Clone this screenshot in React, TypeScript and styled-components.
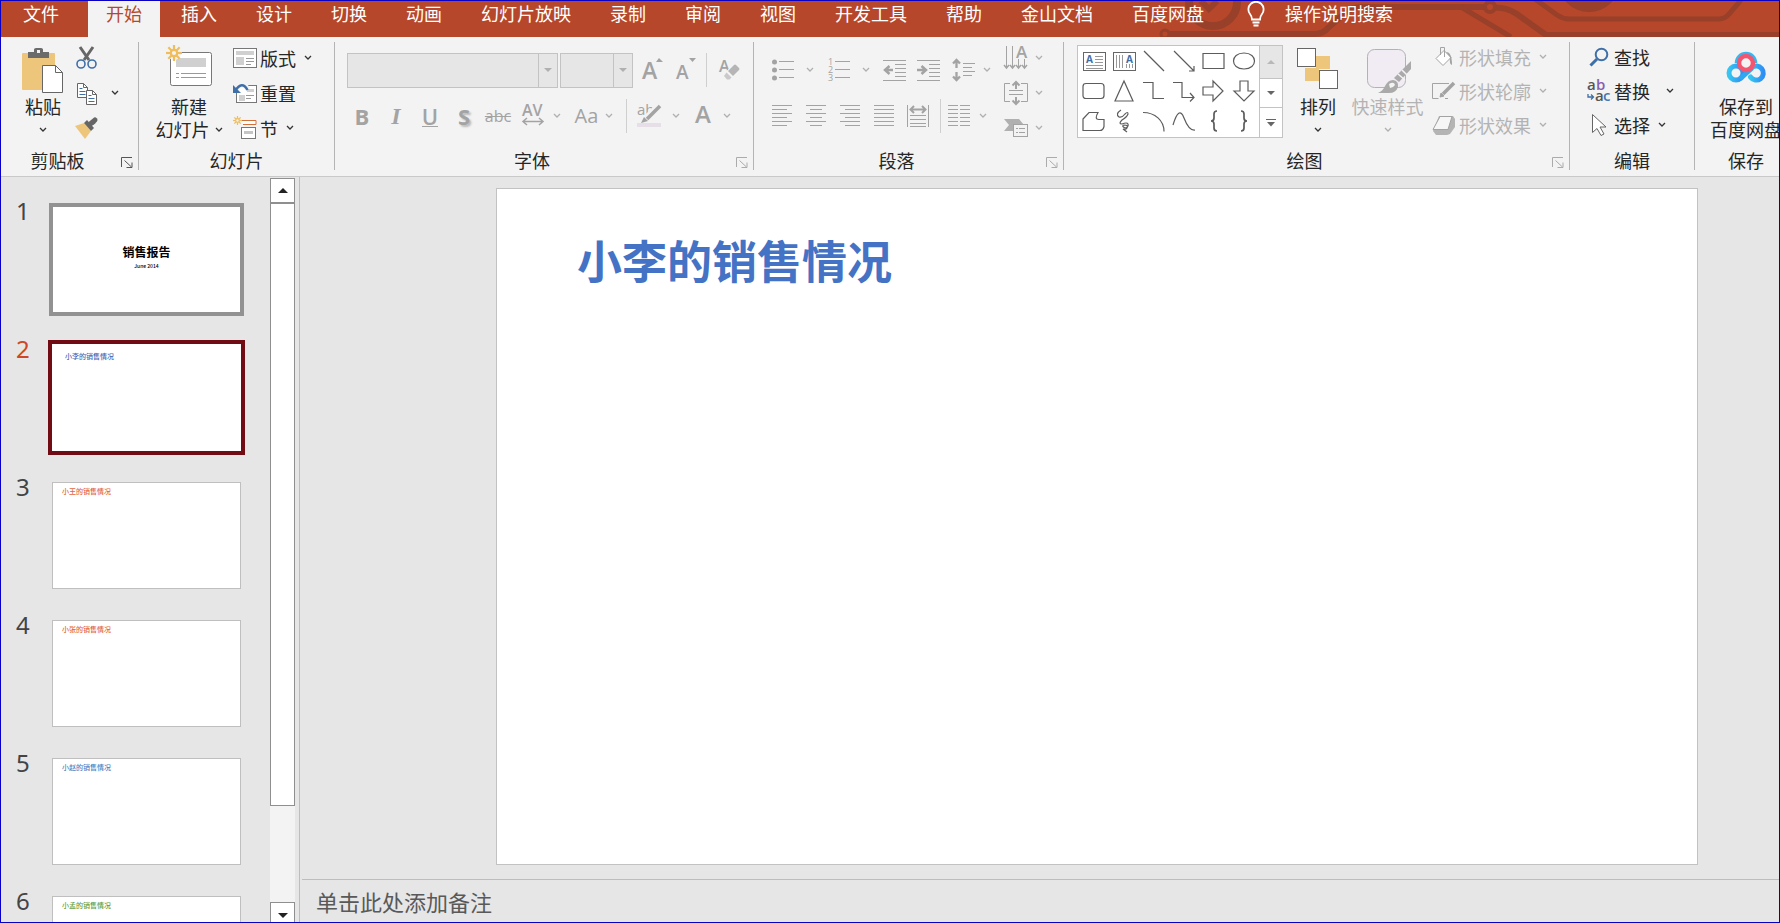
import React from "react";
import styled, { createGlobalStyle, css } from "styled-components";

const GlobalStyle = createGlobalStyle`
  *, *::before, *::after { box-sizing: border-box; }
  body {
    margin: 0;
    font-family: "Noto Sans CJK SC", "Noto Sans", sans-serif;
    font-size: 18px;
    line-height: 24px;
    color: #262626;
    background: #e6e6e6;
  }
  button { border: 0; padding: 0; background: none; font: inherit; color: inherit; }
  svg { display: block; flex: none; overflow: visible; }
`;

const GREY = "#a3a3a3";
const INK = "#666";
const GOLD = "#edc67c";
const BLUE = "#3f6fa8";

/* ---------- window ---------- */

const Window = styled.div`
  display: flex;
  flex-direction: column;
  height: 100vh;
  border: 1px solid #0a00c4;
  overflow: hidden;
  background: #e6e6e6;
`;

/* ---------- tab bar ---------- */

const TabBar = styled.nav`
  position: relative;
  flex: none;
  display: flex;
  gap: 3px;
  height: 36px;
  padding-left: 4px;
  overflow: hidden;
  background: #b7472a;
  color: #fff;
`;

const Circuit = styled.svg`
  position: absolute;
  top: 0;
  right: 0;
`;

const Tab = styled.button<{ $active?: boolean; $first?: boolean }>`
  position: relative;
  flex: none;
  padding: 0 18px 12px;
  white-space: nowrap;
  ${(p) => p.$first && css`margin-right: 8px;`}
  ${(p) => p.$active && css`background: #f3f3f3; color: #b7472a;`}
`;

const TellMe = styled.button`
  position: relative;
  flex: none;
  display: flex;
  align-items: flex-start;
  gap: 20px;
  padding: 0 18px 0 22px;
  white-space: nowrap;
`;

/* ---------- ribbon ---------- */

const Ribbon = styled.div`
  flex: none;
  display: flex;
  height: 140px;
  padding: 5px 0 6px;
  background: #f3f3f3;
  border-bottom: 1px solid #c9c9c9;
`;

const Group = styled.section<{ $width: number }>`
  flex: none;
  display: flex;
  flex-direction: column;
  width: ${(p) => p.$width}px;
  border-right: 1px solid #b4b4b4;
  &:last-child { border-right: 0; }
`;

const GroupBody = styled.div<{ $left: number; $gap?: number }>`
  flex: 1;
  min-height: 0;
  display: flex;
  align-items: flex-start;
  gap: ${(p) => p.$gap ?? 0}px;
  padding-left: ${(p) => p.$left}px;
`;

const GroupFooter = styled.div`
  flex: none;
  display: flex;
  align-items: center;
  height: 20px;
`;

const GroupLabel = styled.h2`
  flex: 1;
  margin: 0;
  font-size: 18px;
  font-weight: 400;
  line-height: 20px;
  text-align: center;
`;

const Launcher = styled.button`
  display: flex;
  justify-content: flex-end;
  width: 24px;
  padding: 4px 5px 0 0;
`;

const BigButton = styled.button<{ $width: number; $off?: boolean }>`
  flex: none;
  display: flex;
  flex-direction: column;
  align-items: center;
  width: ${(p) => p.$width}px;
  padding-top: 5px;
  line-height: 23px;
  white-space: nowrap;
  color: ${(p) => (p.$off ? "#b3b3b3" : "#262626")};
`;

const BigIcon = styled.span`
  display: flex;
  align-items: center;
  justify-content: center;
  height: 48px;
`;

const BigLine = styled.span`
  display: flex;
  align-items: center;
  gap: 5px;
  height: 23px;
`;

const Stack = styled.div<{ $row: number; $gap: number }>`
  flex: none;
  display: grid;
  grid-auto-rows: ${(p) => p.$row}px;
  gap: ${(p) => p.$gap}px;
  align-items: center;
  justify-items: start;
`;

const SmallButton = styled.button<{ $gap?: number; $off?: boolean }>`
  display: flex;
  align-items: center;
  gap: ${(p) => p.$gap ?? 8}px;
  line-height: 22px;
  white-space: nowrap;
  color: ${(p) => (p.$off ? "#b3b3b3" : "#262626")};
`;

const SmallIcon = styled.span`
  display: flex;
  justify-content: center;
  width: 24px;
  margin-right: -5px;
`;

const ToolRows = styled.div`
  display: flex;
  flex-direction: column;
  gap: 10px;
  padding-top: 10px;
`;

const ToolRow = styled.div<{ $pad?: number }>`
  display: flex;
  align-items: center;
  height: 36px;
  padding-left: ${(p) => p.$pad ?? 0}px;
`;

const Tool = styled.button<{ $width: number; $gap: number }>`
  flex: none;
  display: flex;
  align-items: center;
  justify-content: center;
  gap: ${(p) => p.$gap}px;
  width: ${(p) => p.$width}px;
  height: 34px;
  color: ${GREY};
`;

const Divider = styled.span`
  flex: none;
  width: 1px;
  height: 34px;
  margin: 0 5px;
  background: #cfcfcf;
`;

const Combo = styled.label<{ $width: number }>`
  flex: none;
  display: flex;
  width: ${(p) => p.$width}px;
  height: 35px;
  margin-right: 2px;
  border: 1px solid #c3c3c3;
  background: #e6e6e6;
`;

const ComboSelect = styled.select`
  flex: 1;
  min-width: 0;
  border: 0;
  appearance: none;
  background: transparent;
`;

const ComboArrow = styled.span`
  display: flex;
  align-items: center;
  justify-content: center;
  width: 19px;
  border-left: 1px solid #c3c3c3;
`;

const Gallery = styled.div`
  flex: none;
  display: flex;
  width: 206px;
  height: 93px;
  margin: 3px 10px 0 0;
  border: 1px solid #c3c3c3;
  background: #fff;
`;

const ShapeGrid = styled.div`
  flex: 1;
  display: grid;
  grid-template-columns: repeat(6, 30px);
  grid-template-rows: repeat(3, 30px);
  padding-left: 1px;
`;

const ShapeCell = styled.button`
  display: flex;
  align-items: center;
  justify-content: center;
`;

const GalleryScroll = styled.div`
  display: grid;
  grid-template-rows: 32px 29px 1fr;
  width: 23px;
  border-left: 1px solid #c3c3c3;
`;

const GalleryArrow = styled.button<{ $off?: boolean }>`
  display: flex;
  align-items: center;
  justify-content: center;
  background: ${(p) => (p.$off ? "#e6e6e6" : "#fff")};
  & + & { border-top: 1px solid #c3c3c3; }
`;

/* ---------- work area ---------- */

const Workspace = styled.div`
  flex: 1;
  min-height: 0;
  display: flex;
`;

const Sidebar = styled.aside`
  flex: none;
  display: flex;
  width: 299px;
  border-right: 1px solid #bdbdbd;
`;

const SlideList = styled.ol`
  flex: 1;
  margin: 0;
  padding: 29px 0 0 15px;
  list-style: none;
  overflow: hidden;
`;

const SlideItem = styled.li<{ $selected?: boolean }>`
  display: flex;
  height: 138px;
  font-family: "Noto Sans", "Open Sans", sans-serif;
  font-size: 24px;
  line-height: 10px;
  color: ${(p) => (p.$selected ? "#d04727" : "#444")};
`;

const SlideNumber = styled.span`
  width: 36px;
`;

type Ring = "none" | "grey" | "red";

const Thumb = styled.button<{ $ring: Ring; $ink: string }>`
  display: flex;
  width: 189px;
  height: 107px;
  padding: 4px 9px;
  border: 1px solid #bfbfbf;
  background: #fff;
  font-family: "Noto Sans CJK SC", sans-serif;
  font-size: 7px;
  font-weight: 500;
  line-height: 8px;
  color: ${(p) => p.$ink};
  ${(p) => p.$ring === "red" && css`
    padding: 7px 12px;
    border-color: #fff;
    outline: 4px solid #720c14;
  `}
  ${(p) => p.$ring === "grey" && css`
    flex-direction: column;
    align-items: center;
    justify-content: center;
    gap: 3px;
    padding: 0 0 4px;
    border-color: #929292;
    outline: 3px solid #929292;
  `}
`;

const CoverTitle = styled.strong`
  font-family: "Liberation Serif", "Noto Sans CJK SC", serif;
  font-size: 12px;
  font-weight: 700;
  line-height: 14px;
`;

const CoverDate = styled.span`
  font-size: 5px;
  line-height: 6px;
`;

const ScrollBar = styled.div`
  flex: none;
  display: flex;
  flex-direction: column;
  width: 25px;
  margin: 1px 4px 0 0;
  background: #f3f3f3;
`;

const ScrollButton = styled.button`
  flex: none;
  display: flex;
  align-items: center;
  justify-content: center;
  height: 25px;
  border: 1px solid #8f8f8f;
  background: #fff;
  &:last-child { height: 20px; padding-top: 5px; border-bottom: 0; }
`;

const ScrollThumb = styled.div`
  flex: 604 1 0;
  border: 1px solid #8f8f8f;
  background: #fff;
`;

const ScrollRest = styled.div`
  flex: 96 1 0;
`;

const Editor = styled.main`
  flex: 1;
  min-width: 0;
  display: flex;
  flex-direction: column;
  padding-left: 2px;
`;

const Stage = styled.div`
  flex: 1;
  display: flex;
  padding: 11px 81px 14px 194px;
`;

const Slide = styled.article`
  flex: 1;
  padding: 41px 80px;
  border: 1px solid #c2c2c2;
  background: #fff;
`;

const SlideTitle = styled.h1`
  margin: 0;
  font-size: 45px;
  font-weight: 700;
  line-height: 60px;
  color: #4472c4;
`;

const Notes = styled.textarea`
  flex: none;
  display: block;
  width: 100%;
  height: 43px;
  padding: 6px 14px 0;
  border: 0;
  border-top: 1px solid #bdbdbd;
  outline: 0;
  resize: none;
  overflow: hidden;
  background: transparent;
  font: 22px/30px "Noto Sans CJK SC", sans-serif;
  &::placeholder { color: #595959; opacity: 1; }
`;

/* ---------- icons ---------- */

const Svg = ({ w, h, children, stroke = "none", sw = 1 }: {
  w: number; h: number; children: React.ReactNode; stroke?: string; sw?: number;
}) => (
  <svg width={w} height={h} viewBox={`0 0 ${w} ${h}`} fill="none" stroke={stroke} strokeWidth={sw} aria-hidden="true">
    {children}
  </svg>
);

const Chevron = ({ off }: { off?: boolean }) => (
  <Svg w={8} h={6} stroke={off ? "#b0b0b0" : "#333"} sw={1.3}><path d="M1 1l3 3 3-3" /></Svg>
);

const Triangle = ({ up, color = "#222", size = 10 }: { up?: boolean; color?: string; size?: number }) => (
  <svg width={size} height={size / 2} viewBox="0 0 10 5" aria-hidden="true">
    <path d={up ? "M0 5L5 0l5 5z" : "M0 0l5 5 5-5z"} fill={color} />
  </svg>
);

const PasteIcon = () => (
  <Svg w={42} h={46}>
    <rect x="0" y="5" width="33" height="37" rx="1" fill={GOLD} />
    <path d="M6 4h6V1.500Q12 0 14 0h5q2 0 2 1.500V4h6v6H6z" fill="#6b6b6b" />
    <rect x="15" y="2" width="3" height="3" fill="#f3f3f3" />
    <path d="M20.500 17.500h13l7 7v20h-20z" fill="#fff" stroke={INK} />
    <path d="M33.500 17.500v7h7" stroke={INK} />
  </Svg>
);

const CutIcon = () => (
  <Svg w={22} h={24}>
    <path d="M4 1l9 13M17 1L8 14" stroke={INK} strokeWidth="3" />
    <circle cx="5" cy="18" r="4" stroke={BLUE} strokeWidth="1.600" />
    <circle cx="16" cy="18" r="4" stroke={BLUE} strokeWidth="1.600" />
  </Svg>
);

const CopyIcon = () => (
  <Svg w={22} h={23} stroke={INK}>
    <path d="M1.500 1.500h6l4 4v10h-10z" fill="#fff" />
    <path d="M7.500 1.500v4h4" />
    <path d="M3.500 6.500h3M3.500 9.500h6M3.500 12.500h6" stroke={BLUE} />
    <path d="M10.500 8.500h6l4 4v10h-10z" fill="#fff" />
    <path d="M16.500 8.500v4h4" />
    <path d="M12.500 13.500h3M12.500 16.500h6M12.500 19.500h6" stroke={BLUE} />
  </Svg>
);

const PainterIcon = () => (
  <Svg w={24} h={22}>
    <path d="M0 9l9-3 7 8-6 8z" fill={GOLD} />
    <path d="M9 6l3-3 7 8-3 3z" fill={INK} />
    <path d="M14 8l5-4" stroke={INK} strokeWidth="5" />
    <path d="M18 5l2-2" stroke={INK} strokeWidth="5" strokeLinecap="round" />
  </Svg>
);

const Spark = ({ x, y, r }: { x: number; y: number; r: number }) => (
  <g transform={`translate(${x} ${y})`} stroke="#f0bd5c" strokeWidth={r > 6 ? 2.2 : 1.2}>
    {[0, 45, 90, 135, 180, 225, 270, 315].map((a) => (
      <path key={a} transform={`rotate(${a})`} d={`M0 ${-r * 0.4}V${-r}`} />
    ))}
    <circle r={r * 0.4} />
  </g>
);

const NewSlideIcon = () => (
  <Svg w={46} h={46}>
    <rect x="4.500" y="4.500" width="41" height="33" rx="2" fill="#fff" stroke="#777" />
    <path d="M10 10h30v9H10z" fill="#d0d0d0" />
    <path d="M10 25.500h3M15 25.500h25M10 29.500h3M15 29.500h25" stroke="#999" />
    <circle cx="8" cy="5" r="7" fill="#f3f3f3" />
    <Spark x={8} y={5} r={8} />
  </Svg>
);

const LayoutIcon = () => (
  <Svg w={24} h={20}>
    <rect x="0.500" y="0.500" width="23" height="19" fill="#fff" stroke="#777" />
    <path d="M3 3h18v4H3zM3 9h8v8H3z" fill="#d0d0d0" />
    <path d="M13 10.500h8M13 13.500h8M13 16.500h5" stroke="#999" />
  </Svg>
);

const ResetIcon = () => (
  <Svg w={24} h={21}>
    <rect x="3.500" y="2.500" width="20" height="17" fill="#fff" stroke="#777" />
    <path d="M14 6h7v3h-7zM6 12h6v6H6z" fill="#d0d0d0" />
    <path d="M13 12.500h8M13 15.500h5" stroke="#999" />
    <path d="M3 6Q9-2 15 6" stroke="#f3f3f3" strokeWidth="5" />
    <path d="M2 8Q9-3 14.500 7" stroke={BLUE} strokeWidth="2.500" />
    <path d="M0 2v8h8z" fill={BLUE} />
  </Svg>
);

const SectionIcon = () => (
  <Svg w={24} h={24}>
    <path d="M9 4.500h14v4H10" fill="#fff" stroke="#d2703a" />
    <rect x="8.500" y="11.500" width="14" height="11" fill="#fff" stroke="#777" />
    <rect x="11" y="15" width="9" height="3" fill="#c4c4c4" />
    <Spark x={4.500} y={4.500} r={4.500} />
  </Svg>
);

const LauncherIcon = ({ off }: { off?: boolean }) => (
  <Svg w={12} h={11} stroke={off ? "#ababab" : "#555"}>
    <path d="M0.500 10V0.500H11M3.500 3.500l7 6.500M11 5.500v5H5.500" />
  </Svg>
);

const Glyph = styled.text<{ $size: number; $weight?: number }>`
  font-family: "Open Sans", "Noto Sans", sans-serif;
  font-size: ${(p) => p.$size}px;
  font-weight: ${(p) => p.$weight ?? 400};
  stroke: none;
`;

const GrowIcon = () => (
  <Svg w={20} h={26}><Glyph $size={23} $weight={600} x="0" y="22" fill={GREY}>A</Glyph><path d="M14 5l3-4 4 4z" fill={GREY} /></Svg>
);
const ShrinkIcon = () => (
  <Svg w={18} h={26}><Glyph $size={19} $weight={600} x="0" y="22" fill={GREY}>A</Glyph><path d="M13 1h7l-3.500 4z" fill={GREY} /></Svg>
);
const ClearIcon = () => (
  <Svg w={22} h={24}>
    <Glyph $size={16} $weight={600} x="1" y="14" fill={GREY}>A</Glyph>
    <path d="M5 16l9-8 6 6-9 8H9z" fill="#f3f3f3" />
    <path d="M10 13l6-6q1-1 2 0l3 3q1 1 0 2l-6 6z" fill="#b5b5b5" />
    <path d="M8.500 14.500l5 5-2 2H9l-3-3.500z" fill="#c9c9c9" />
  </Svg>
);

const BoldText = styled.span`
  font-family: "Open Sans", sans-serif;
  font-size: 22px;
  font-weight: 700;
`;
const ItalicText = styled(BoldText)`
  font-family: "Liberation Serif", serif;
  font-size: 24px;
  font-style: italic;
`;
const UnderText = styled(BoldText)`
  font-weight: 600;
  line-height: 20px;
  border-bottom: 1px solid ${GREY};
`;
const ShadowText = styled(BoldText)`
  text-shadow: 2px 2px 2px #bbb;
`;
const StrikeText = styled.s`
  font-family: "Open Sans", sans-serif;
  font-size: 16px;
`;
const CaseText = styled.span`
  font-family: "Open Sans", sans-serif;
  font-size: 20px;
`;
const ColorText = styled.span`
  font-family: "Open Sans", sans-serif;
  font-size: 24px;
  font-weight: 600;
  line-height: 20px;
  padding-bottom: 4px;
`;

const SpacingIcon = () => (
  <Svg w={22} h={24} stroke={GREY} sw={1.5}>
    <Glyph $size={16} $weight={600} x="0" y="12" fill={GREY}>AV</Glyph>
    <path d="M1 17.500h20M5 14l-4 3.500L5 21M17 14l4 3.500-4 3.500" />
  </Svg>
);
const HighlightIcon = () => (
  <Svg w={24} h={26}>
    <Glyph $size={15} x="0" y="12" fill={GREY}>ab</Glyph>
    <rect x="0" y="20" width="24" height="4" fill="#e6dfe8" />
    <path d="M22 2L8 16" stroke="#f3f3f3" strokeWidth="6" />
    <path d="M23 3L10 16" stroke={GREY} strokeWidth="3.500" />
    <path d="M4 20l3-6 4 4z" fill={GREY} />
  </Svg>
);

const BulletsIcon = () => (
  <Svg w={23} h={22} stroke={GREY}>
    {[3, 11, 19].map((y) => <g key={y}><circle cx="2.500" cy={y} r="2.500" fill={GREY} stroke="none" /><path d={`M7 ${y - 0.5}h15`} /></g>)}
  </Svg>
);
const NumbersIcon = () => (
  <Svg w={23} h={24} stroke={GREY}>
    {[1, 2, 3].map((n) => <g key={n}><Glyph $size={9} x="0" y={n * 8 - 1} fill={GREY}>{n}</Glyph><path d={`M7 ${n * 8 - 4.5}h15`} /></g>)}
  </Svg>
);
const IndentIcon = ({ out }: { out?: boolean }) => (
  <Svg w={23} h={22} stroke={GREY}>
    <path d="M0 1.500h23M12 5.500h11M12 9.500h11M12 13.500h11M12 17.500h11M0 21.500h23" />
    {out
      ? <path d="M10 11H2M6.500 7L2 11l4.500 4" strokeWidth="2.500" />
      : <path d="M0 11h8M4.500 7L9 11l-4.500 4" strokeWidth="2.500" />}
  </Svg>
);
const LineSpacingIcon = () => (
  <Svg w={23} h={24} stroke={GREY}>
    <path d="M11 5.500h12M11 9.500h9M11 13.500h12M11 17.500h9" />
    <path d="M4.500 2v8M1 5.500L4.500 2 8 5.500M4.500 14v8M1 18.500L4.500 22 8 18.500" strokeWidth="2.300" />
  </Svg>
);
const AlignIcon = ({ kind }: { kind: "left" | "center" | "right" | "justify" }) => (
  <Svg w={21} h={22} stroke={GREY}>
    {[0, 1, 2, 3, 4, 5].map((i) => {
      const len = kind === "justify" || i % 2 === 0 ? 20 : kind === "center" ? 12 : 15;
      const x = kind === "center" ? (20 - len) / 2 : kind === "right" ? 20 - len : 0;
      return <path key={i} d={`M${x} ${i * 4 + 0.5}h${len}`} />;
    })}
  </Svg>
);
const DistributeIcon = () => (
  <Svg w={23} h={23} stroke={GREY}>
    <path d="M0.500 0v22M21.500 0v22M3 10.500h16M3 14.500h16M3 18.500h16M3 21.500h16" />
    <path d="M4 4.500h14M7 1L3.500 4.500 7 8M15 1l3.500 3.500L15 8" strokeWidth="2" />
  </Svg>
);
const ColumnsIcon = () => (
  <Svg w={22} h={22} stroke={GREY}>
    {[0, 1, 2, 3, 4, 5].map((i) => <path key={i} d={`M0 ${i * 4 + 0.5}h10M12 ${i * 4 + 0.5}h10`} />)}
  </Svg>
);
const DirectionIcon = () => (
  <Svg w={24} h={24} stroke={GREY}>
    <path d="M2.500 0v22M8.500 0v22M14.500 13v9M20.500 13v9" />
    <path d="M0 19l2.500 3L5 19M6 19l2.500 3 2.500-3M12 19l2.500 3 2.500-3M18 19l2.500 3 2.500-3" strokeWidth="1.500" />
    <Glyph $size={17} $weight={600} x="12" y="12" fill={GREY}>A</Glyph>
  </Svg>
);
const AlignTextIcon = () => (
  <Svg w={24} h={24} stroke={GREY}>
    <path d="M6 2.500H0.500v18H6M17 2.500h6.500v18H17M5 9.500h14M5 13.500h14" />
    <path d="M12 1v7M8.500 4.500L12 1l3.500 3.500M12 16v7M8.500 19.500L12 23l3.500-3.500" strokeWidth="2" />
  </Svg>
);
const SmartArtIcon = () => (
  <Svg w={24} h={20}>
    <path d="M0 1h15l5 6H10v6H0l5-6z" fill="#b0b0b0" />
    <rect x="9.500" y="6.500" width="14" height="12" fill="#f3f3f3" stroke={GREY} />
    <path d="M12 10.500h2M15 10.500h6M12 14.500h2M15 14.500h6" stroke={GREY} />
  </Svg>
);

const ArrangeIcon = () => (
  <Svg w={42} h={46} stroke={INK}>
    <path d="M19 8h14v13H19zM8 20h14v13H8z" fill={GOLD} stroke="none" />
    <rect x="0.500" y="0.500" width="18" height="18" fill="#fff" />
    <rect x="22.500" y="22.500" width="18" height="18" fill="#fff" />
  </Svg>
);
const QuickStyleIcon = () => (
  <Svg w={46} h={46}>
    <rect x="2.500" y="1.500" width="38" height="38" rx="7" fill="#f1ebf3" stroke="#b5afb8" />
    <path d="M46 13v8L34 34l-5-4z" fill="#aaa" />
    <path d="M33 26l7 6M37 22l6 6" stroke="#f3f3f3" strokeWidth="1.500" />
    <path d="M13 45q5-2 7-7 3-6 8-6 6 1 5 7-2 6-9 6z" fill="#aaa" />
    <path d="M24 36q5-3 6 1-2 3-5 3z" fill="#f3f3f3" />
  </Svg>
);

const FillIcon = () => (
  <Svg w={20} h={22} stroke={GREY}>
    <path d="M2 12.500l8-8 7 7-8 8z" fill="#fff" />
    <path d="M6.500 9V1.500h4V11" />
    <path d="M12 6q6 0 6 13-3-1-2-8z" fill={GREY} stroke="none" />
  </Svg>
);
const OutlineIcon = () => (
  <Svg w={24} h={20} stroke={GREY}>
    <path d="M17 2.500H0.500v15h6M13 17.500h3" />
    <path d="M22 2L11 13" strokeWidth="3.500" /><path d="M8 16l1-4 3 3z" fill={GREY} />
  </Svg>
);
const EffectsIcon = () => (
  <Svg w={24} h={21}>
    <path d="M7 1h14l2 3v8l-5 7-3 1H4l-3-4z" fill="#b4b4b4" />
    <path d="M8 1.500h12l-4 13H1z" fill="#f6f6f6" stroke={GREY} />
  </Svg>
);

const FindIcon = () => (
  <Svg w={20} h={20} stroke={BLUE}><circle cx="12.500" cy="7.500" r="5.800" strokeWidth="2" /><path d="M8 12l-6.500 6.500" strokeWidth="3" /></Svg>
);
const ReplaceIcon = () => (
  <Svg w={24} h={24}>
    <Glyph $size={15} $weight={600} x="0" y="11" fill="#555">a</Glyph>
    <Glyph $size={15} $weight={600} x="9" y="11" fill="#8661b0">b</Glyph>
    <Glyph $size={15} $weight={600} x="8" y="22" fill="#555">a</Glyph>
    <Glyph $size={15} $weight={600} x="16" y="22" fill="#3f78b5">c</Glyph>
    <path d="M1 15v3h5M4 15.500L6.500 18 4 20.500" stroke={BLUE} strokeWidth="1.300" />
  </Svg>
);
const SelectIcon = () => (
  <Svg w={16} h={24} stroke={INK}><path d="M1.500 1.500v18l4.500-4 4 7 3-1.500-4-7h6z" fill="#fff" /></Svg>
);

const CloudIcon = () => (
  <Svg w={40} h={42}>
    <defs>
      <linearGradient id="cloudBlue" x1="0" x2="1"><stop offset="0" stopColor="#35c5f0" /><stop offset="1" stopColor="#2f8df5" /></linearGradient>
    </defs>
    <circle cx="10" cy="23" r="7" stroke="url(#cloudBlue)" strokeWidth="5" />
    <path d="M24.500 27a7 7 0 1 0 1-9" stroke="url(#cloudBlue)" strokeWidth="5" strokeLinecap="round" />
    <path d="M14 29L26 18" stroke="#2fa8f2" strokeWidth="5" />
    <path d="M11 13a9 9 0 0 1 18 0" stroke="#33b8f2" strokeWidth="4.500" />
    <circle cx="20" cy="13" r="7" fill="#f3f3f3" stroke="#f4566f" strokeWidth="4.500" />
  </Svg>
);

const BulbIcon = () => (
  <svg width="18" height="26" viewBox="0 0 18 26" fill="none" stroke="#fff" strokeWidth="1.800" aria-hidden="true">
    <path d="M5 18.500q0-3-2-5.500a7.600 7.600 0 1 1 12 0q-2 2.500-2 5.500z" /><path d="M5.500 21.500h7M6.500 24.500h5" />
  </svg>
);

const CircuitPattern = () => (
  <Circuit width="640" height="36" viewBox="0 0 640 36" fill="none" stroke="#984029" strokeWidth="6" aria-hidden="true">
    <circle cx="74" cy="1" r="24" strokeWidth="8" />
    <path d="M62 0l10 10M78 0l-6 6" />
    <circle cx="26" cy="33" r="4" strokeWidth="3" />
    <path d="M30 33h146q8 0 14-7l16-14q7-6 16-6h130l10 1q10 1 20 9l25 18h236" />
    <circle cx="351" cy="6" r="5" strokeWidth="4" fill="#b7472a" />
    <path d="M322 6l50 30M396-2l22 16q6 4 12 4h150q6 0 10-5l12-14" strokeWidth="5" />
    <circle cx="450" cy="-20" r="31" fill="#984029" stroke="none" />
  </Circuit>
);

/* ---------- shape gallery ---------- */

const TextBoxShape = ({ vertical }: { vertical?: boolean }) => (
  <Svg w={23} h={19} stroke={INK}>
    <rect x="0.500" y="0.500" width="22" height="18" />
    <path d={vertical ? "M3.500 3v13M6.500 3v13M9.500 3v13M13.500 12v4M16.500 12v4M19.500 12v4" : "M12 4.500h8M12 7.500h8M12 10.500h8M3 13.500h17M3 16.500h17"} stroke="#999" />
    <Glyph $size={10} $weight={700} x={vertical ? 13 : 3} y="11" fill={BLUE}>A</Glyph>
  </Svg>
);

const Path = ({ d, sw = 1.2 }: { d: string; sw?: number }) => <Svg w={24} h={22} stroke="#5c5c5c" sw={sw}><path d={d} /></Svg>;

const shapes: [string, React.ReactNode][] = [
  ["文本框", <TextBoxShape />],
  ["竖排文本框", <TextBoxShape vertical />],
  ["直线", <Path d="M2 1l20 20" />],
  ["箭头", <Path d="M2 1l20 20M22 16v5h-5" />],
  ["矩形", <Path d="M1 3.500h21v15H1z" />],
  ["椭圆", <Path d="M12 3c14 0 14 16 0 16S-2 3 12 3z" />],
  ["圆角矩形", <Path d="M4 3.500h15q3 0 3 3v9q0 3-3 3H4q-3 0-3-3v-9q0-3 3-3z" />],
  ["三角形", <Path d="M12 1l9 20H3z" />],
  ["肘形连接符", <Path d="M1 2.500h10v16h11" />],
  ["肘形箭头", <Path d="M1 2.500h9v15h12M18 13l4 4.500-4 4" />],
  ["右箭头", <Path d="M1 7h10V1l10 10-10 10v-6H1z" />],
  ["下箭头", <Path d="M8 1h8v10h6L12 21 2 11h6z" />],
  ["任意多边形", <Path d="M1 9l6-6.500h9q-4 7 1 7h5v7q-1 4-4 4H1z" />],
  ["自由曲线", <Path d="M9 0Q3 4 7 7q3 1 6-3 3-3 3 0-1 3-6 6-4 4 0 4 5-2 6 0 1 3-3 4-4-2-1-3 5 0 3 3-1 2-4 1l4 3" />],
  ["弧形", <Path d="M1 2.500c12 0 21 8 21 19" />],
  ["曲线", <Path d="M1 15Q7-5 12 8t11 12" />],
  ["左大括号", <Path sw={1.7} d="M15 1q-3 0-3 3v4q0 3-3 3 3 0 3 3v4q0 3 3 3" />],
  ["右大括号", <Path sw={1.7} d="M9 1q3 0 3 3v4q0 3 3 3-3 0-3 3v4q0 3-3 3" />],
];

/* ---------- pieces ---------- */

const RibbonGroup = ({ title, width, left, gap, launcher, children }: {
  title: string; width: number; left: number; gap?: number; launcher?: "on" | "off"; children: React.ReactNode;
}) => (
  <Group $width={width} aria-label={title}>
    <GroupBody $left={left} $gap={gap}>{children}</GroupBody>
    <GroupFooter>
      <GroupLabel>{title}</GroupLabel>
      {launcher && <Launcher aria-label={`${title}设置`}><LauncherIcon off={launcher === "off"} /></Launcher>}
    </GroupFooter>
  </Group>
);

const IconLabel = ({ icon, text, menu, off, gap }: {
  icon: React.ReactNode; text: string; menu?: boolean; off?: boolean; gap?: number;
}) => (
  <SmallButton $off={off} $gap={gap}>
    <SmallIcon>{icon}</SmallIcon>{text}{menu && <Chevron off={off} />}
  </SmallButton>
);

const ToolButton = ({ label, width, gap = 7, menu, children }: {
  label: string; width: number; gap?: number; menu?: boolean; children: React.ReactNode;
}) => (
  <Tool $width={width} $gap={gap} aria-label={label}>{children}{menu && <Chevron off />}</Tool>
);

const ComboBox = ({ label, width }: { label: string; width: number }) => (
  <Combo $width={width}>
    <ComboSelect aria-label={label} disabled />
    <ComboArrow><Triangle color="#b0b0b0" size={8} /></ComboArrow>
  </Combo>
);

const tabs = ["文件", "开始", "插入", "设计", "切换", "动画", "幻灯片放映", "录制", "审阅", "视图", "开发工具", "帮助", "金山文档", "百度网盘"];

const slides: { title: string; ink: string; ring: Ring }[] = [
  { title: "销售报告", ink: "#000", ring: "grey" },
  { title: "小李的销售情况", ink: "#4468b4", ring: "red" },
  { title: "小王的销售情况", ink: "#e2673f", ring: "none" },
  { title: "小张的销售情况", ink: "#e2673f", ring: "none" },
  { title: "小赵的销售情况", ink: "#4a83c4", ring: "none" },
  { title: "小孟的销售情况", ink: "#5fa040", ring: "none" },
];

export default function App() {
  return (
    <Window>
      <GlobalStyle />
      <TabBar>
        <CircuitPattern />
        {tabs.map((t, i) => <Tab key={t} $active={i === 1} $first={i === 0}>{t}</Tab>)}
        <TellMe><BulbIcon />操作说明搜索</TellMe>
      </TabBar>

      <Ribbon>
        <RibbonGroup title="剪贴板" width={138} left={17} gap={7} launcher="on">
          <BigButton $width={50}>
            <BigIcon><PasteIcon /></BigIcon>
            <BigLine>粘贴</BigLine>
            <BigLine><Chevron /></BigLine>
          </BigButton>
          <Stack $row={32} $gap={3}>
            <SmallButton aria-label="剪切"><SmallIcon><CutIcon /></SmallIcon></SmallButton>
            <SmallButton $gap={17} aria-label="复制"><SmallIcon><CopyIcon /></SmallIcon><Chevron /></SmallButton>
            <SmallButton aria-label="格式刷"><SmallIcon><PainterIcon /></SmallIcon></SmallButton>
          </Stack>
        </RibbonGroup>

        <RibbonGroup title="幻灯片" width={196} left={12} gap={6}>
          <BigButton $width={76}>
            <BigIcon><NewSlideIcon /></BigIcon>
            <BigLine>新建</BigLine>
            <BigLine>幻灯片 <Chevron /></BigLine>
          </BigButton>
          <Stack $row={32} $gap={3}>
            <IconLabel icon={<LayoutIcon />} text="版式" menu />
            <IconLabel icon={<ResetIcon />} text="重置" />
            <IconLabel icon={<SectionIcon />} text="节" menu />
          </Stack>
        </RibbonGroup>

        <RibbonGroup title="字体" width={419} left={10} launcher="off">
          <ToolRows>
            <ToolRow $pad={2}>
              <ComboBox label="字体" width={211} />
              <ComboBox label="字号" width={73} />
              <ToolButton label="增大字号" width={34}><GrowIcon /></ToolButton>
              <ToolButton label="减小字号" width={32}><ShrinkIcon /></ToolButton>
              <Divider />
              <ToolButton label="清除格式" width={34}><ClearIcon /></ToolButton>
            </ToolRow>
            <ToolRow>
              <ToolButton label="加粗" width={34}><BoldText>B</BoldText></ToolButton>
              <ToolButton label="倾斜" width={34}><ItalicText>I</ItalicText></ToolButton>
              <ToolButton label="下划线" width={34}><UnderText>U</UnderText></ToolButton>
              <ToolButton label="阴影" width={34}><ShadowText>S</ShadowText></ToolButton>
              <ToolButton label="删除线" width={34}><StrikeText>abc</StrikeText></ToolButton>
              <ToolButton label="字符间距" width={52} gap={9} menu><SpacingIcon /></ToolButton>
              <ToolButton label="更改大小写" width={54} menu><CaseText>Aa</CaseText></ToolButton>
              <Divider />
              <ToolButton label="突出显示" width={52} gap={11} menu><HighlightIcon /></ToolButton>
              <ToolButton label="字体颜色" width={58} gap={12} menu><ColorText>A</ColorText></ToolButton>
            </ToolRow>
          </ToolRows>
        </RibbonGroup>

        <RibbonGroup title="段落" width={310} left={11} launcher="off">
          <ToolRows>
            <ToolRow>
              <ToolButton label="项目符号" width={56} gap={11} menu><BulletsIcon /></ToolButton>
              <ToolButton label="编号" width={56} gap={11} menu><NumbersIcon /></ToolButton>
              <ToolButton label="减少缩进" width={34}><IndentIcon out /></ToolButton>
              <ToolButton label="增加缩进" width={34}><IndentIcon /></ToolButton>
              <ToolButton label="行距" width={52} gap={8} menu><LineSpacingIcon /></ToolButton>
            </ToolRow>
            <ToolRow>
              <ToolButton label="左对齐" width={34}><AlignIcon kind="left" /></ToolButton>
              <ToolButton label="居中" width={34}><AlignIcon kind="center" /></ToolButton>
              <ToolButton label="右对齐" width={34}><AlignIcon kind="right" /></ToolButton>
              <ToolButton label="两端对齐" width={34}><AlignIcon kind="justify" /></ToolButton>
              <ToolButton label="分散对齐" width={34}><DistributeIcon /></ToolButton>
              <Divider />
              <ToolButton label="分栏" width={42} gap={9} menu><ColumnsIcon /></ToolButton>
            </ToolRow>
          </ToolRows>
          <Stack $row={32} $gap={3}>
            <ToolButton label="文字方向" width={52} menu><DirectionIcon /></ToolButton>
            <ToolButton label="对齐文本" width={52} menu><AlignTextIcon /></ToolButton>
            <ToolButton label="转换为 SmartArt" width={52} menu><SmartArtIcon /></ToolButton>
          </Stack>
        </RibbonGroup>

        <RibbonGroup title="绘图" width={506} left={13} launcher="off">
          <Gallery>
            <ShapeGrid>
              {shapes.map(([name, icon]) => <ShapeCell key={name} aria-label={name}>{icon}</ShapeCell>)}
            </ShapeGrid>
            <GalleryScroll>
              <GalleryArrow $off aria-label="上一行"><Triangle up color="#b8b8b8" size={8} /></GalleryArrow>
              <GalleryArrow aria-label="下一行"><Triangle color="#666" size={8} /></GalleryArrow>
              <GalleryArrow aria-label="更多形状"><Svg w={10} h={8}><path d="M0 0.500h10" stroke={INK} /><path d="M1 3h8L5 7.500z" fill={INK} /></Svg></GalleryArrow>
            </GalleryScroll>
          </Gallery>
          <BigButton $width={50}>
            <BigIcon><ArrangeIcon /></BigIcon>
            <BigLine>排列</BigLine>
            <BigLine><Chevron /></BigLine>
          </BigButton>
          <BigButton $width={89} $off>
            <BigIcon><QuickStyleIcon /></BigIcon>
            <BigLine>快速样式</BigLine>
            <BigLine><Chevron off /></BigLine>
          </BigButton>
          <Stack $row={30} $gap={4}>
            <IconLabel icon={<FillIcon />} text="形状填充" menu off />
            <IconLabel icon={<OutlineIcon />} text="形状轮廓" menu off />
            <IconLabel icon={<EffectsIcon />} text="形状效果" menu off />
          </Stack>
        </RibbonGroup>

        <RibbonGroup title="编辑" width={125} left={17}>
          <Stack $row={30} $gap={4}>
            <IconLabel icon={<FindIcon />} text="查找" />
            <SmallButton>
              <SmallIcon><ReplaceIcon /></SmallIcon>替换<span /><Chevron />
            </SmallButton>
            <IconLabel icon={<SelectIcon />} text="选择" menu />
          </Stack>
        </RibbonGroup>

        <RibbonGroup title="保存" width={102} left={10}>
          <BigButton $width={82}>
            <BigIcon><CloudIcon /></BigIcon>
            <BigLine>保存到</BigLine>
            <BigLine>百度网盘</BigLine>
          </BigButton>
        </RibbonGroup>
      </Ribbon>

      <Workspace>
        <Sidebar>
          <SlideList>
            {slides.map((s, i) => (
              <SlideItem key={s.title} $selected={s.ring === "red"}>
                <SlideNumber>{i + 1}</SlideNumber>
                <Thumb $ring={s.ring} $ink={s.ink}>
                  {i === 0 ? <><CoverTitle>{s.title}</CoverTitle><CoverDate>June 2014</CoverDate></> : s.title}
                </Thumb>
              </SlideItem>
            ))}
          </SlideList>
          <ScrollBar>
            <ScrollButton aria-label="向上滚动"><Triangle up /></ScrollButton>
            <ScrollThumb />
            <ScrollRest />
            <ScrollButton aria-label="向下滚动"><Triangle /></ScrollButton>
          </ScrollBar>
        </Sidebar>
        <Editor>
          <Stage>
            <Slide><SlideTitle>小李的销售情况</SlideTitle></Slide>
          </Stage>
          <Notes aria-label="备注" placeholder="单击此处添加备注" />
        </Editor>
      </Workspace>
    </Window>
  );
}
